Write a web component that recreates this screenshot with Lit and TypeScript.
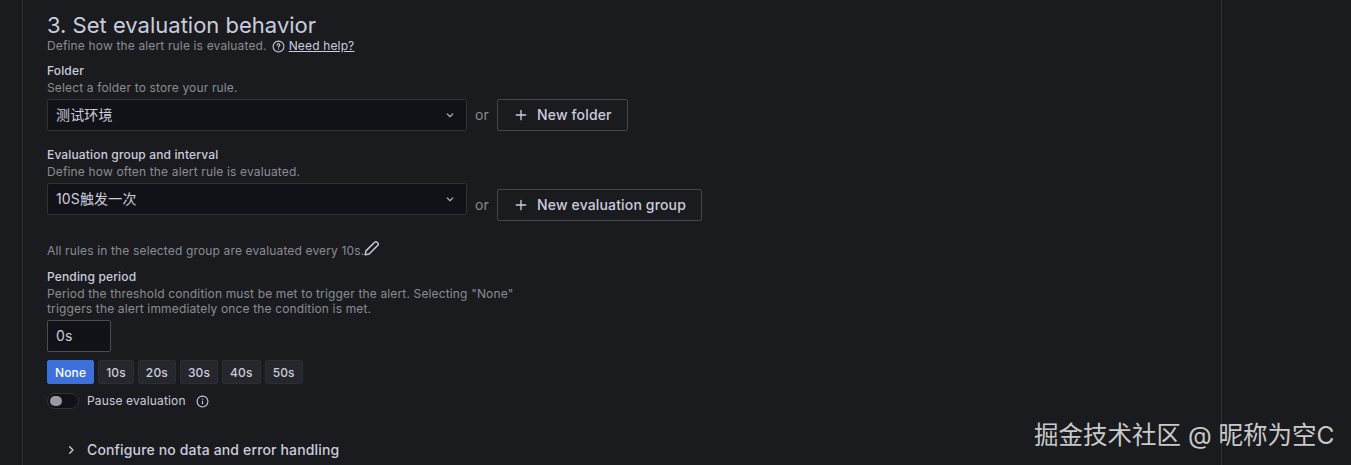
import { LitElement, html, css } from 'lit';
import { customElement } from 'lit/decorators.js';

const chevronDown = html`<svg class="chev" viewBox="0 0 24 24" width="16" height="16"><path d="M8 10.5l4 4 4-4" fill="none" stroke="currentColor" stroke-width="2" stroke-linecap="round" stroke-linejoin="round"/></svg>`;
const plus = html`<svg viewBox="0 0 24 24" width="16" height="16"><path d="M12 5v14M5 12h14" fill="none" stroke="currentColor" stroke-width="2" stroke-linecap="round"/></svg>`;

@customElement('app-root')
export class AppRoot extends LitElement {
  static styles = css`
    :host {
      display: block;
      position: relative;
      height: 465px;
      overflow: hidden;
      background: #191b1f;
      color: #ccccdc;
      font-family: Inter, 'Noto Sans CJK SC', sans-serif;
      font-size: 14px;
      letter-spacing: 0.15px;
    }
    .panel {
      box-sizing: border-box;
      width: 1200px;
      height: 465px;
      margin-left: 22px;
      padding: 12px 24px 0;
      border-left: 1px solid #2c2f34;
      border-right: 1px solid #2c2f34;
    }
    h3 {
      margin: 0;
      font-size: 22px;
      font-weight: 400;
      line-height: 27px;
      letter-spacing: 0;
      color: #ccccdc;
    }
    .sub {
      display: flex;
      align-items: center;
      gap: 5px;
      font-size: 12px;
      line-height: 14px;
      color: #8b8c93;
    }
    .sub svg { color: #ccccdc; }
    .sub a {
      color: #ccccdc;
      text-decoration: underline;
      margin-left: -1px;
    }
    .label {
      font-size: 12px;
      font-weight: 500;
      line-height: 16px;
      margin-bottom: 1px;
      color: #ccccdc;
    }
    .desc {
      font-size: 12px;
      line-height: 16px;
      color: #8b8c93;
    }
    .folder { margin-top: 10px; }
    .group { margin-top: 16px; }
    .row {
      display: flex;
      align-items: flex-start;
      margin-top: 3px;
    }
    .select {
      box-sizing: border-box;
      width: 420px;
      height: 32px;
      display: flex;
      align-items: center;
      justify-content: space-between;
      padding: 0 8px;
      background: #111217;
      border: 1px solid #2e3136;
      border-radius: 2px;
    }
    .select span,
    .btn span,
    .dur span {
      margin-bottom: 2px;
    }
    .chev { color: #a3a4ab; }
    .or {
      width: 30px;
      text-align: center;
      color: #8b8c93;
      line-height: 32px;
    }
    .or-wrap {
      display: flex;
      align-items: center;
    }
    .or-wrap.down { margin-top: 6px; }
    .btn {
      box-sizing: border-box;
      height: 32px;
      display: flex;
      align-items: center;
      gap: 8px;
      padding: 0 15px;
      border: 1px solid #45474d;
      border-radius: 2px;
      font-weight: 500;
      color: #ccccdc;
    }
    .note {
      display: flex;
      align-items: flex-end;
      margin-top: 18px;
      font-size: 12px;
      line-height: 16px;
      color: #8b8c93;
    }
    .note svg { color: #ccccdc; margin: 0 0 1px -2px; }
    .pending { margin-top: 10px; }
    .pending .desc { width: 480px; line-height: 15px; }
    .dur {
      box-sizing: border-box;
      width: 64px;
      height: 32px;
      margin-top: 4px;
      display: flex;
      align-items: center;
      padding: 0 8px;
      background: #111217;
      border: 1px solid #4a4c52;
      border-radius: 2px;
    }
    .chips {
      display: flex;
      gap: 4px;
      margin-top: 8px;
    }
    .chip {
      box-sizing: border-box;
      height: 24px;
      display: flex;
      align-items: center;
      padding: 0 7px;
      background: #25272c;
      border: 1px solid #2c2e33;
      border-radius: 2px;
      font-size: 12px;
      font-weight: 500;
      color: #ccccdc;
    }
    .chip.on {
      background: #3d71d9;
      border-color: #3d71d9;
      color: #fff;
    }
    .pause {
      display: flex;
      align-items: center;
      margin-top: 9px;
      font-size: 12px;
      line-height: 16px;
    }
    .toggle {
      box-sizing: border-box;
      width: 32px;
      height: 16px;
      padding: 2px;
      margin-right: 8px;
      background: #111217;
      border: 1px solid #2e3136;
      border-radius: 8px;
    }
    .toggle i {
      display: block;
      width: 12px;
      height: 10px;
      border-radius: 6px;
      background: #9a9ba1;
    }
    .pause svg { margin-left: 10px; color: #ccccdc; }
    .configure {
      display: flex;
      align-items: center;
      gap: 8px;
      margin: 32px 0 0 16px;
      font-weight: 500;
      line-height: 18px;
    }
    .mark {
      position: absolute;
      left: 1034px;
      top: 419px;
      font-size: 24.5px;
      line-height: 32px;
      letter-spacing: 0;
      color: #c9c9c9;
      white-space: nowrap;
    }
  `;

  render() {
    return html`
      <div class="panel">
        <h3>3. Set evaluation behavior</h3>
        <div class="sub">
          <span>Define how the alert rule is evaluated.</span>
          <svg viewBox="0 0 24 24" width="13" height="13"><circle cx="12" cy="12" r="10" fill="none" stroke="currentColor" stroke-width="2"/><path d="M9.5 9.5a2.5 2.5 0 1 1 3.6 2.2c-.8.4-1.1.9-1.1 1.8" fill="none" stroke="currentColor" stroke-width="2" stroke-linecap="round"/><circle cx="12" cy="17" r="1.2" fill="currentColor"/></svg>
          <a>Need help?</a>
        </div>

        <div class="folder">
          <div class="label">Folder</div>
          <div class="desc">Select a folder to store your rule.</div>
          <div class="row">
            <div class="select"><span>测试环境</span>${chevronDown}</div>
            <div class="or-wrap">
              <span class="or">or</span>
              <div class="btn">${plus}<span>New folder</span></div>
            </div>
          </div>
        </div>

        <div class="group">
          <div class="label">Evaluation group and interval</div>
          <div class="desc">Define how often the alert rule is evaluated.</div>
          <div class="row">
            <div class="select"><span>10S触发一次</span>${chevronDown}</div>
            <div class="or-wrap down">
              <span class="or">or</span>
              <div class="btn">${plus}<span>New evaluation group</span></div>
            </div>
          </div>
        </div>

        <div class="note">
          <span>All rules in the selected group are evaluated every 10s.</span>
          <svg viewBox="0 0 24 24" width="19" height="19"><path d="M4 20l1-5L16 4a2 2 0 0 1 3 0l1 1a2 2 0 0 1 0 3L9 19z" fill="none" stroke="currentColor" stroke-width="1.8" stroke-linejoin="round"/></svg>
        </div>

        <div class="pending">
          <div class="label">Pending period</div>
          <div class="desc">Period the threshold condition must be met to trigger the alert. Selecting "None" triggers the alert immediately once the condition is met.</div>
          <div class="dur"><span>0s</span></div>
          <div class="chips">
            <div class="chip on">None</div>
            <div class="chip">10s</div>
            <div class="chip">20s</div>
            <div class="chip">30s</div>
            <div class="chip">40s</div>
            <div class="chip">50s</div>
          </div>
        </div>

        <div class="pause">
          <div class="toggle"><i></i></div>
          <span>Pause evaluation</span>
          <svg viewBox="0 0 24 24" width="13" height="13"><circle cx="12" cy="12" r="10" fill="none" stroke="currentColor" stroke-width="2"/><path d="M12 11v5" stroke="currentColor" stroke-width="2" stroke-linecap="round"/><circle cx="12" cy="7.5" r="1.2" fill="currentColor"/></svg>
        </div>

        <div class="configure">
          <svg viewBox="0 0 24 24" width="16" height="16"><path d="M10 7l5 5-5 5" fill="none" stroke="currentColor" stroke-width="2" stroke-linecap="round" stroke-linejoin="round"/></svg>
          <span>Configure no data and error handling</span>
        </div>
      </div>
      <div class="mark">掘金技术社区 @ 昵称为空C</div>
    `;
  }
}
